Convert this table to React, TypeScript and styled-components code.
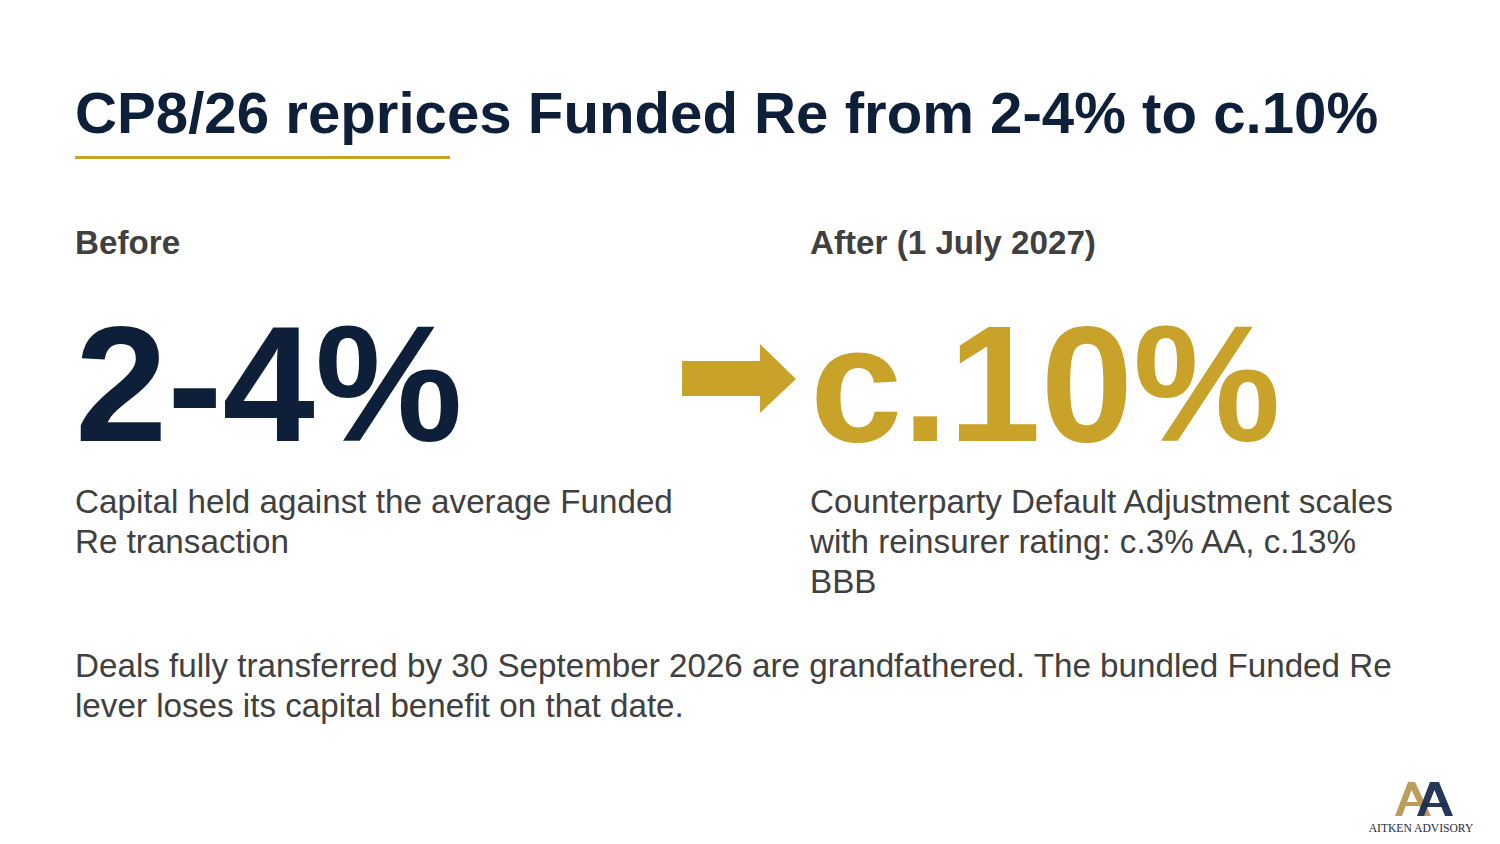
import React from "react";
import styled, { createGlobalStyle } from "styled-components";

const NAVY = "#0e2039";
const GOLD = "#c9a22a";
const INK = "#404040";

const GlobalStyle = createGlobalStyle`
  html, body {
    margin: 0;
    padding: 0;
    background: #ffffff;
  }
  body {
    font-family: "Liberation Sans", Arial, sans-serif;
  }
`;

const Slide = styled.div`
  min-height: 844px;
  box-sizing: border-box;
  padding: 78px 75px 0;
  display: flex;
  flex-direction: column;
  background: #fff;
`;

const Title = styled.h1`
  margin: 0;
  font-size: 58.2px;
  line-height: 70px;
  font-weight: 700;
  color: ${NAVY};
  white-space: nowrap;
`;

const Rule = styled.div`
  margin-top: 8px;
  width: 375px;
  height: 3px;
  background: ${GOLD};
`;

/* three tracks: before | arrow | after, three rows: label, figure, text */
const Compare = styled.div`
  margin-top: 64px;
  display: grid;
  grid-template-columns: 606px 129px 610px;
  grid-template-rows: auto auto auto;
`;

const Label = styled.div<{ $col: number }>`
  grid-column: ${(p) => p.$col};
  grid-row: 1;
  font-size: 33.2px;
  line-height: 39px;
  font-weight: 700;
  color: ${INK};
`;

const BigFigure = styled.div<{ $tone: "navy" | "gold"; $col: number }>`
  grid-column: ${(p) => p.$col};
  grid-row: 2;
  margin-top: 40px;
  font-size: 166px;
  line-height: 164px;
  font-weight: 700;
  color: ${(p) => (p.$tone === "gold" ? GOLD : NAVY)};
  white-space: nowrap;
`;

const ArrowCell = styled.div`
  grid-column: 2;
  grid-row: 2;
  margin-top: 40px;
  padding: 42px 0 0 1px;
`;

const ArrowMark = styled.svg`
  display: block;
  width: 114px;
  height: 69px;
`;

const Description = styled.p<{ $col: number }>`
  grid-column: ${(p) => p.$col};
  grid-row: 3;
  margin: 16px 0 0;
  font-size: 33.2px;
  line-height: 40px;
  color: ${INK};
`;

const Note = styled.p`
  margin: 44px 0 0;
  font-size: 33.2px;
  line-height: 40px;
  color: ${INK};
`;

const Footer = styled.div`
  margin-top: auto;
  margin-right: -50px;
  padding-bottom: 9px;
  display: flex;
  justify-content: flex-end;
`;

const Logo = styled.div`
  display: flex;
  flex-direction: column;
  align-items: center;
  gap: 7px;
`;

const LogoMark = styled.svg`
  width: 108px;
  height: 34px;
`;

const LogoText = styled.span`
  font-family: "Liberation Serif", "Times New Roman", serif;
  font-size: 11.6px;
  line-height: 1;
  color: #1f2a3d;
  white-space: nowrap;
`;

const Arrow = () => (
  <ArrowCell>
    <ArrowMark viewBox="0 0 114 69">
      <rect x="0" y="17" width="79" height="35" fill={GOLD} />
      <polygon points="78,0 114,35 78,69" fill={GOLD} />
    </ArrowMark>
  </ArrowCell>
);

const AitkenLogo = () => (
  <Logo>
    <LogoMark viewBox="0 0 108 34">
      <g fill="#bd9d5c">
        <path d="M28 34 L41 0 L48 0 L64 34 L57 34 L44.5 8 L35 34 Z" />
        <rect x="33" y="20" width="26" height="4" />
      </g>
      <g fill="#1d2f52" fillOpacity="0.96">
        <path d="M50 34 L63 0 L72 0 L86 34 L78 34 L67.5 8 L57 34 Z" />
        <rect x="55" y="21" width="25" height="4" />
      </g>
    </LogoMark>
    <LogoText>AITKEN ADVISORY</LogoText>
  </Logo>
);

export default function App() {
  return (
    <>
      <GlobalStyle />
      <Slide>
        <Title>CP8/26 reprices Funded Re from 2-4% to c.10%</Title>
        <Rule />
        <Compare>
          <Label $col={1}>Before</Label>
          <Label $col={3}>After (1 July 2027)</Label>
          <BigFigure $tone="navy" $col={1}>
            2-4%
          </BigFigure>
          <Arrow />
          <BigFigure $tone="gold" $col={3}>
            c.10%
          </BigFigure>
          <Description $col={1}>
            Capital held against the average Funded Re transaction
          </Description>
          <Description $col={3}>
            Counterparty Default Adjustment scales with reinsurer rating: c.3%
            AA, c.13% BBB
          </Description>
        </Compare>
        <Note>
          Deals fully transferred by 30 September 2026 are grandfathered. The
          bundled Funded Re lever loses its capital benefit on that date.
        </Note>
        <Footer>
          <AitkenLogo />
        </Footer>
      </Slide>
    </>
  );
}
